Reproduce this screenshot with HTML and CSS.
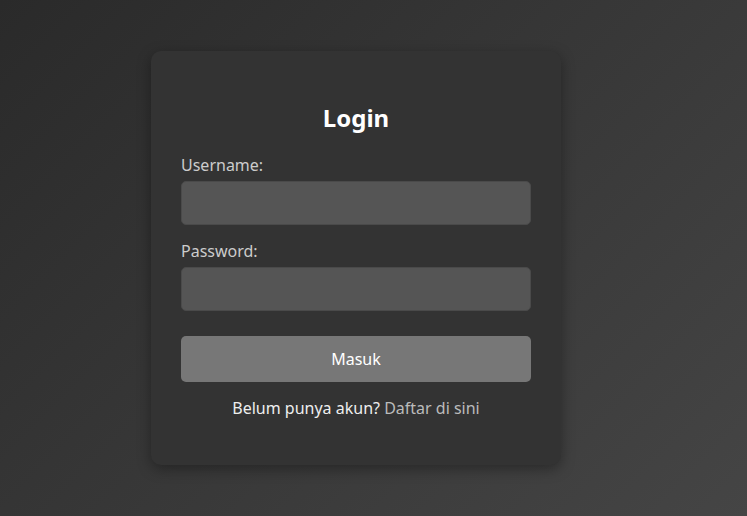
FILE: index.html
```html
<!DOCTYPE html>
<html lang="id">
<head>
<meta charset="utf-8">
<title>Login</title>
<link rel="stylesheet" href="styles.css">
</head>
<body>
<main class="page">
  <div class="card">
    <h2 class="title">Login</h2>
    <form class="form">
      <label class="label" for="u">Username:</label>
      <input class="input" id="u" type="text">
      <label class="label" for="p">Password:</label>
      <input class="input" id="p" type="password">
      <button class="btn" type="button">Masuk</button>
    </form>
    <p class="note">Belum punya akun? <a class="link" href="#">Daftar di sini</a></p>
  </div>
</main>
</body>
</html>
```
FILE: styles.css
```css
html, body {
  margin: 0;
  height: 100%;
}
body {
  font-family: "Noto Sans", "Open Sans", sans-serif;
  background: linear-gradient(135deg, #2a2a2a 0%, #454545 100%);
  color: #fff;
}
.page {
  height: 100%;
  display: flex;
  align-items: center;
  justify-content: center;
  padding-right: 35px;
  box-sizing: border-box;
}
.card {
  width: 410px;
  box-sizing: border-box;
  padding: 30px;
  background: #333;
  border-radius: 10px;
  box-shadow: 0 4px 14px rgba(0, 0, 0, 0.35);
}
.title {
  margin: 20px 0;
  text-align: center;
  font-size: 24px;
  font-weight: 700;
  color: #fff;
}
.form {
  display: flex;
  flex-direction: column;
}
.label {
  font-size: 16px;
  color: #ccc;
  margin-bottom: 5px;
}
.input {
  height: 44px;
  box-sizing: border-box;
  padding: 10px;
  font: inherit;
  background: #555;
  border: 1px solid #4a4a4a;
  border-radius: 5px;
  color: #fff;
  margin-bottom: 15px;
}
.btn {
  margin-top: 10px;
  height: 46px;
  font: inherit;
  font-size: 16px;
  background: #777;
  color: #fff;
  border: none;
  border-radius: 5px;
}
.note {
  margin: 15px 0 16px;
  text-align: center;
  font-size: 16px;
  color: #eee;
}
.link {
  color: #bbb;
  text-decoration: none;
}
```
